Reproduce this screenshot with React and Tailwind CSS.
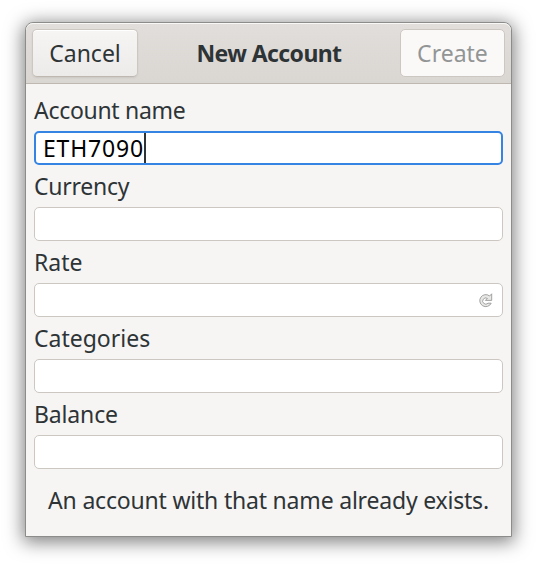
import React from "react";

const labelText = "whitespace-nowrap font-['Noto_Sans','Open_Sans',sans-serif] text-[23px] leading-[32px]";

function RefreshIcon() {
  return (
    <svg width="14" height="15" viewBox="0 0 14 15" fill="none" className="block">
      <path
        d="M12.7 0.8V7.4H6.4L8.4 5.4A3.1 3.1 0 1 0 9 10.2H12.2A6 6 0 1 1 10.6 3Z"
        fill="#e8e8e6"
        stroke="#999997"
        strokeWidth="0.9"
        strokeLinejoin="round"
      />
    </svg>
  );
}

function Field({ label, spacing, focused, value, children }) {
  return (
    <div className="flex flex-col">
      <div className={`flex h-[42px] items-center text-[#2e3436] ${labelText} ${spacing}`}>{label}</div>
      <div
        className={`flex h-[34px] items-center rounded-[5px] bg-white ${
          focused ? "border-2 border-[#3584e4] pl-[7px]" : "border border-[#cdc7c2] pl-2"
        }`}
      >
        {value && (
          <>
            <span className={`text-black tracking-[0.8px] ${labelText}`}>{value}</span>
            <span className="h-[30px] w-[2px] bg-[#2e3436]" />
          </>
        )}
        {children}
      </div>
    </div>
  );
}

export default function App() {
  return (
    <div className="h-[565px] w-[537px] overflow-hidden bg-white pl-[25px] pt-[22px]">
      <div className="flex h-[515px] w-[487px] flex-col overflow-hidden rounded-t-[8px] border border-[#8c8c8a] bg-[#f6f5f4] shadow-[0_3px_18px_2px_rgba(0,0,0,0.5)]">
        <header className="flex h-[61px] shrink-0 items-start justify-between rounded-t-[7px] border-b border-[#bfb8b1] bg-linear-to-b from-[#e1dedb] to-[#dad6d2] px-[6px] pt-[6px] shadow-[inset_0_1px_#f9f8f7]">
          <button className={`flex h-[48px] w-[106px] items-center justify-center rounded-[5px] border border-[#cdc7c2] border-b-[#bfb8b1] bg-linear-to-b from-[#f6f5f4] to-[#edebe9] text-[#2e3436] shadow-[inset_0_1px_white,0_1px_2px_rgba(0,0,0,0.07)] ${labelText}`}>
            Cancel
          </button>
          <h1 className={`flex h-[48px] items-center font-bold text-[#2e3436] tracking-[-0.6px] ${labelText}`}>New Account</h1>
          <button disabled className={`flex h-[48px] w-[105px] items-center justify-center rounded-[5px] border border-[#cdc7c2] bg-[#faf9f8] text-[#929595] ${labelText}`}>
            Create
          </button>
        </header>
        <main className="flex flex-col px-2 pt-[5px]">
          <Field label="Account name" spacing="tracking-[-0.3px]" focused value="ETH7090" />
          <Field label="Currency" spacing="tracking-[-0.25px]" />
          <Field label="Rate" spacing="tracking-[0px]">
            <span className="ml-auto mr-[9px]">
              <RefreshIcon />
            </span>
          </Field>
          <Field label="Categories" spacing="tracking-[0px]" />
          <Field label="Balance" spacing="tracking-[-0.15px]" />
          <p className={`mt-[15px] text-center text-[#2e3436] tracking-[-0.2px] ${labelText}`}>An account with that name already exists.</p>
        </main>
      </div>
    </div>
  );
}
